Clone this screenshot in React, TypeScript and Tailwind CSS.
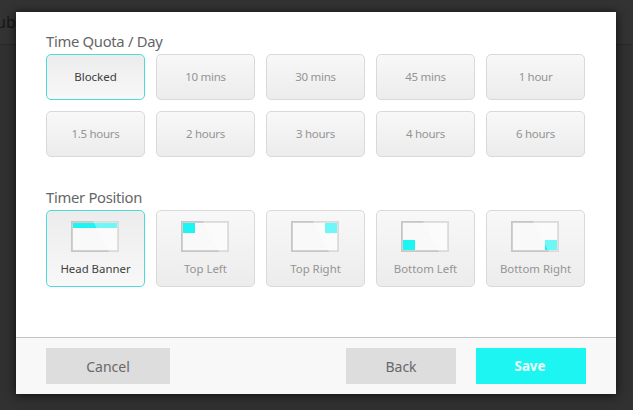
import React from 'react';
import clsx from 'clsx';

type Position = 'banner' | 'topLeft' | 'topRight' | 'bottomLeft' | 'bottomRight';

const QUOTAS = ['Blocked', '10 mins', '30 mins', '45 mins', '1 hour', '1.5 hours', '2 hours', '3 hours', '4 hours', '6 hours'];

const POSITIONS: { id: Position; label: string }[] = [
  { id: 'banner', label: 'Head Banner' },
  { id: 'topLeft', label: 'Top Left' },
  { id: 'topRight', label: 'Top Right' },
  { id: 'bottomLeft', label: 'Bottom Left' },
  { id: 'bottomRight', label: 'Bottom Right' },
];

// Area of the screen that the timer covers
const MARKS: Record<Position, { x: number; y: number; w: number; h: number }> = {
  banner: { x: 2, y: 2, w: 44, h: 5 },
  topLeft: { x: 2, y: 2, w: 12, h: 10 },
  topRight: { x: 34, y: 2, w: 12, h: 10 },
  bottomLeft: { x: 2, y: 19, w: 12, h: 10 },
  bottomRight: { x: 34, y: 19, w: 12, h: 10 },
};

const ScreenIcon = ({ position }: { position: Position }) => {
  const mark = MARKS[position];
  return (
    <svg width="48" height="31" viewBox="0 0 48 31" className="mr-px shrink-0">
      <rect x="0.9" y="0.9" width="46.2" height="29.2" fill="#f9f9f9" stroke="#c6c6c6" strokeWidth="1.8" />
      <rect x={mark.x} y={mark.y} width={mark.w} height={mark.h} fill="#1cf5f2" />
      {/* Glare */}
      <path d="M22 0H48V31H38Z" fill="#fff" fillOpacity="0.36" />
    </svg>
  );
};

interface OptionProps {
  selected: boolean;
  className: string;
  children: React.ReactNode;
}

const Option = ({ selected, className, children }: OptionProps) => (
  <button
    className={clsx(
      'flex flex-col items-center rounded-[5px] border leading-4 whitespace-nowrap',
      selected
        ? 'border-[#49dcda] bg-linear-to-b from-[#ececec] to-[#f8f8f8] text-[#404040]'
        : 'border-[#d9d9d9] bg-linear-to-b from-[#f8f8f8] to-[#ececec] text-[#949494]',
      className
    )}
  >
    {children}
  </button>
);

export default function App() {
  return (
    <div className="relative h-[410px] w-[633px] overflow-hidden bg-[#313131] px-4 pt-3 font-['Noto_Sans',sans-serif]">
      {/* Dimmed page behind the dialog */}
      <div className="absolute inset-x-0 top-0 h-[45px] border-b border-[#292929] bg-[#333333]">
        <span className="absolute top-[11px] -left-[4px] text-[16px] leading-[22px] text-[#171717]">ub</span>
      </div>

      <div className="relative flex h-[382px] w-[600px] flex-col bg-white shadow-[0_1px_10px_rgba(0,0,0,0.75)]">
        <div className="flex-1 px-[30px] pt-[19px]">
          <h2 className="h-[23px] text-[14.8px] leading-5 tracking-[-0.3px] text-[#666]">Time Quota / Day</h2>
          <div className="grid grid-cols-[repeat(5,99px)] gap-[11px]">
            {QUOTAS.map((quota) => (
              <Option
                key={quota}
                selected={quota === 'Blocked'}
                className={clsx('h-[46px] justify-center', quota === 'Blocked' ? 'text-[11.5px]' : 'text-[11.5px] tracking-[-0.3px]')}
              >
                {quota}
              </Option>
            ))}
          </div>

          <h2 className="mt-[30px] h-[23px] text-[14.8px] leading-5 tracking-[-0.3px] text-[#666]">Timer Position</h2>
          <div className="grid grid-cols-[repeat(5,99px)] gap-[11px]">
            {POSITIONS.map(({ id, label }) => (
              <Option key={id} selected={id === 'banner'} className="h-[77px] gap-[9px] pt-2.5 text-[11.4px]">
                <ScreenIcon position={id} />
                <span>{label}</span>
              </Option>
            ))}
          </div>
        </div>

        <div className="flex h-[57px] shrink-0 border-t border-[#c4c4c4] bg-[#f8f8f8] px-[30px] pt-2.5 text-[14px] text-[#696969]">
          <button className="h-9 w-[124px] bg-[#dddddd]">Cancel</button>
          <button className="ml-auto h-9 w-[110px] bg-[#dddddd]">Back</button>
          <button className="ml-5 h-9 w-[110px] bg-[#1cf5f2] pt-0.5 pr-0.5 text-[13.3px] font-bold text-[#effffe]">Save</button>
        </div>
      </div>
    </div>
  );
}
